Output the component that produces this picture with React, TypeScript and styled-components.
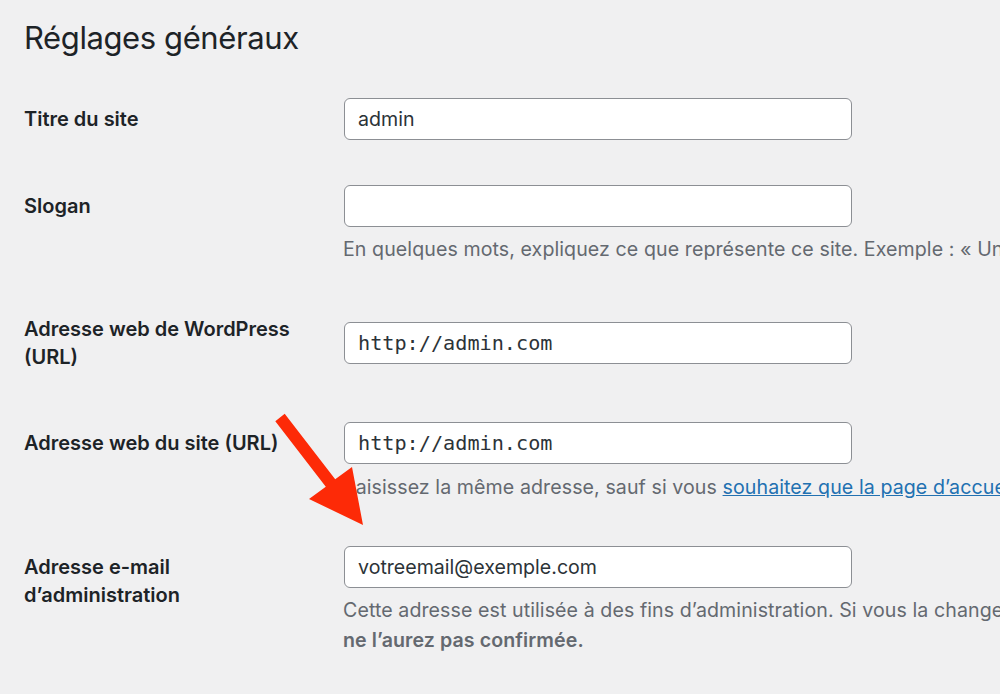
import React from "react";
import styled, { createGlobalStyle } from "styled-components";

const GlobalStyle = createGlobalStyle`
  html, body {
    margin: 0;
    padding: 0;
    background: #f0f0f1;
    overflow: hidden;
  }
  body {
    font-family: Inter, "Noto Sans", "Liberation Sans", sans-serif;
    color: #1d2327;
  }
`;

const Page = styled.div`
  position: relative;
  width: 1000px;
  height: 694px;
  overflow: hidden;
  box-sizing: border-box;
  padding: 18px 0 0 24px;
`;

const Heading = styled.h1`
  margin: 0;
  font-size: 31px;
  font-weight: 400;
  line-height: 40px;
  letter-spacing: -0.4px;
  color: #1d2327;
  white-space: nowrap;
`;

const Row = styled.div<{ $pt: number }>`
  display: grid;
  grid-template-columns: 320px max-content;
  align-items: start;
  padding-top: ${(p) => p.$pt}px;
`;

const Label = styled.label<{ $offset?: number }>`
  display: block;
  margin-top: ${(p) => p.$offset ?? 7}px;
  font-size: 20px;
  font-weight: 600;
  line-height: 28px;
  color: #1d2327;
  white-space: nowrap;
`;

const Field = styled.div`
  display: flex;
  flex-direction: column;
  align-items: flex-start;
`;

const TextInput = styled.input<{ $mono?: boolean }>`
  box-sizing: border-box;
  width: 508px;
  height: 42px;
  margin: 0;
  padding: 0 13px;
  border: 1px solid #8c8f94;
  border-radius: 6px;
  background: #fff;
  color: #2c3338;
  outline: none;
  font-family: ${(p) =>
    p.$mono
      ? `"DejaVu Sans Mono", "Liberation Mono", monospace`
      : `Inter, "Noto Sans", "Liberation Sans", sans-serif`};
  font-size: ${(p) => (p.$mono ? "20.2px" : "19.6px")};
`;

const Description = styled.p<{ $gap?: number }>`
  margin: ${(p) => p.$gap ?? 7}px 0 0 -1px;
  font-size: 19.6px;
  line-height: 30px;
  letter-spacing: 0.08px;
  color: #646970;
  white-space: nowrap;

  strong {
    font-weight: 600;
  }
`;

const Link = styled.a`
  color: #2271b1;
  text-decoration: underline;
`;

const Pointer = styled.svg`
  position: absolute;
  left: 270px;
  top: 405px;
  width: 100px;
  height: 125px;
  pointer-events: none;
`;

export default function App() {
  return (
    <>
      <GlobalStyle />
      <Page>
        <Heading>Réglages généraux</Heading>

        <Row $pt={40}>
          <Label htmlFor="blogname">Titre du site</Label>
          <Field>
            <TextInput id="blogname" readOnly defaultValue="admin" />
          </Field>
        </Row>

        <Row $pt={45}>
          <Label htmlFor="blogdescription">Slogan</Label>
          <Field>
            <TextInput id="blogdescription" readOnly defaultValue="" />
            <Description>
              En quelques mots, expliquez ce que représente ce site. Exemple : « Un site propulsé par
              WordPress ».
            </Description>
          </Field>
        </Row>

        <Row $pt={58}>
          <Label htmlFor="siteurl" $offset={-7}>
            Adresse web de WordPress
            <br />
            (URL)
          </Label>
          <Field>
            <TextInput id="siteurl" $mono readOnly defaultValue="http://admin.com" />
          </Field>
        </Row>

        <Row $pt={51}>
          <Label htmlFor="home">Adresse web du site (URL)</Label>
          <Field>
            <TextInput id="home" $mono readOnly defaultValue="http://admin.com" />
            <Description $gap={8}>
              Saisissez la même adresse, sauf si vous{" "}
              <Link href="#home">
                souhaitez que la page d’accueil de votre site soit différente du répertoire
                d’installation de WordPress
              </Link>
              .
            </Description>
          </Field>
        </Row>

        <Row $pt={44}>
          <Label htmlFor="new_admin_email">
            Adresse e-mail
            <br />
            d’administration
          </Label>
          <Field>
            <TextInput id="new_admin_email" readOnly defaultValue="votreemail@exemple.com" />
            <Description>
              Cette adresse est utilisée à des fins d’administration. Si vous la changez, nous vous
              enverrons un e-mail à la nouvelle adresse pour la confirmer.{" "}
              <strong>La nouvelle adresse ne sera pas active tant que vous</strong>
              <br />
              <strong>ne l’aurez pas confirmée.</strong>
            </Description>
          </Field>
        </Row>

        <Pointer viewBox="0 0 100 125" aria-hidden="true">
          <polygon
            fill="#fd2a07"
            points="14.7,8.8 65.2,74.3 82,62 93,120 39,94 55.8,81.7 5.3,16.2"
          />
        </Pointer>
      </Page>
    </>
  );
}
